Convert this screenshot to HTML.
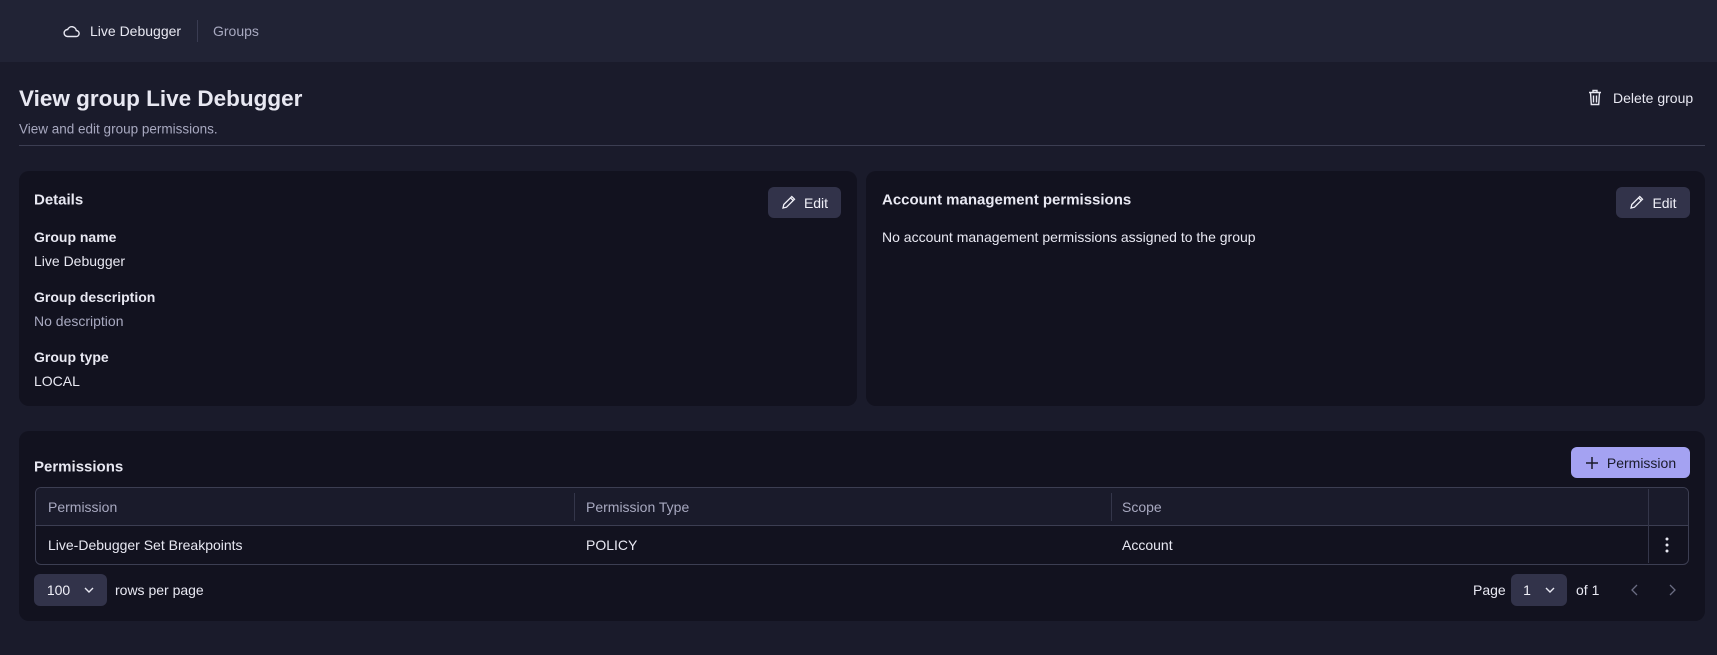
<!DOCTYPE html>
<html><head><meta charset="utf-8"><style>
*{box-sizing:border-box;margin:0;padding:0}
body{width:1717px;height:655px;overflow:hidden;background:#1a1b2b;font-family:"Liberation Sans",sans-serif;color:#e8e8f2;font-size:14px;position:relative}
.abs{position:absolute;white-space:nowrap}
.hdr{position:absolute;left:0;top:0;width:1717px;height:62px;background:#212335}
.card{position:absolute;background:#12121f;border-radius:10px}
.btn{position:absolute;background:#32334a;border-radius:6px;display:flex;align-items:center;justify-content:center;gap:8px;font-size:14px;color:#f0f0f8}
.lbl{font-weight:bold;font-size:14px}
.muted{color:#a8a9c0}
.vc{transform:translateY(-50%)}
</style></head><body>
<div class="hdr"></div>
<svg class="abs" style="left:63px;top:24px" width="17" height="14" viewBox="0 0 17 14"><path d="M4.5 12.5h8.5a3 3 0 0 0 .3-6 4.5 4.5 0 0 0-8.6-1A3.3 3.3 0 0 0 4.5 12.5z" fill="none" stroke="#e8e8f2" stroke-width="1.4"/></svg>
<div class="abs vc" style="left:90px;top:31px">Live Debugger</div>
<div class="abs" style="left:197px;top:20px;width:1px;height:22px;background:#3a3c52"></div>
<div class="abs vc muted" style="left:213px;top:31px">Groups</div>

<div class="abs vc" style="left:19px;top:99px;font-size:22.5px;font-weight:bold">View group Live Debugger</div>
<div class="abs vc muted" style="left:19px;top:129px;font-size:13.5px">View and edit group permissions.</div>
<div class="abs" style="left:19px;top:145px;width:1686px;height:1px;background:#3c3e52"></div>
<svg class="abs" style="left:1588px;top:89px" width="14" height="17" viewBox="0 0 14 17"><path d="M1 3.5h12M5 3.5V1.5h4v2M2.5 3.5l.8 12h7.4l.8-12M5.5 6.5v7M8.5 6.5v7" fill="none" stroke="#e8e8f2" stroke-width="1.4"/></svg>
<div class="abs vc" style="left:1613px;top:98px">Delete group</div>

<div class="card" style="left:19px;top:171px;width:838px;height:235px"></div>
<div class="card" style="left:866px;top:171px;width:839px;height:235px"></div>
<div class="abs vc lbl" style="left:34px;top:200px;font-size:15px">Details</div>
<div class="btn" style="left:768px;top:187px;width:73px;height:31px"><svg width="15" height="15" viewBox="0 0 15 15"><path d="M2 13l.8-3.5 8-8 2.7 2.7-8 8zM9.5 2.8l2.7 2.7" fill="none" stroke="#f0f0f8" stroke-width="1.3"/></svg>Edit</div>
<div class="abs vc lbl" style="left:34px;top:237px">Group name</div>
<div class="abs vc" style="left:34px;top:261px">Live Debugger</div>
<div class="abs vc lbl" style="left:34px;top:297px">Group description</div>
<div class="abs vc muted" style="left:34px;top:321px">No description</div>
<div class="abs vc lbl" style="left:34px;top:357px">Group type</div>
<div class="abs vc" style="left:34px;top:381px">LOCAL</div>

<div class="abs vc lbl" style="left:882px;top:200px;font-size:15px">Account management permissions</div>
<div class="btn" style="left:1616px;top:187px;width:74px;height:31px"><svg width="15" height="15" viewBox="0 0 15 15"><path d="M2 13l.8-3.5 8-8 2.7 2.7-8 8zM9.5 2.8l2.7 2.7" fill="none" stroke="#f0f0f8" stroke-width="1.3"/></svg>Edit</div>
<div class="abs vc" style="left:882px;top:237px">No account management permissions assigned to the group</div>

<div class="card" style="left:19px;top:431px;width:1686px;height:190px"></div>
<div class="abs vc lbl" style="left:34px;top:467px;font-size:15px">Permissions</div>
<div class="btn" style="left:1571px;top:447px;width:119px;height:31px;background:#a4a2f2;color:#1a1b2b"><svg width="14" height="14" viewBox="0 0 14 14"><path d="M7 1v12M1 7h12" stroke="#1a1b2b" stroke-width="1.5"/></svg>Permission</div>
<div class="abs" style="left:35px;top:487px;width:1654px;height:78px;border:1.5px solid #3c3e52;border-radius:6px;overflow:hidden">
 <div style="position:absolute;left:0;top:0;width:100%;height:38px;background:#1a1b2b;border-bottom:1.5px solid #3c3e52"></div>
</div>
<div class="abs" style="left:574px;top:493px;width:1px;height:28px;background:#34364a"></div>
<div class="abs" style="left:1111px;top:493px;width:1px;height:28px;background:#34364a"></div>
<div class="abs" style="left:1648px;top:489px;width:1px;height:74px;background:#34364a"></div>
<div class="abs vc muted" style="left:48px;top:507px">Permission</div>
<div class="abs vc muted" style="left:586px;top:507px">Permission Type</div>
<div class="abs vc muted" style="left:1122px;top:507px">Scope</div>
<div class="abs vc" style="left:48px;top:545px">Live-Debugger Set Breakpoints</div>
<div class="abs vc" style="left:586px;top:545px">POLICY</div>
<div class="abs vc" style="left:1122px;top:545px">Account</div>
<svg class="abs" style="left:1665px;top:537px" width="4" height="16"><circle cx="2" cy="2" r="1.5" fill="#e8e8f2"/><circle cx="2" cy="8" r="1.5" fill="#e8e8f2"/><circle cx="2" cy="14" r="1.5" fill="#e8e8f2"/></svg>

<div class="btn" style="left:34px;top:574px;width:73px;height:32px;gap:14px">100<svg width="10" height="6" viewBox="0 0 10 6"><path d="M1 1l4 4 4-4" fill="none" stroke="#e8e8f2" stroke-width="1.4"/></svg></div>
<div class="abs vc" style="left:115px;top:590px">rows per page</div>
<div class="abs vc" style="left:1473px;top:590px">Page</div>
<div class="btn" style="left:1511px;top:574px;width:56px;height:32px;gap:14px">1<svg width="10" height="6" viewBox="0 0 10 6"><path d="M1 1l4 4 4-4" fill="none" stroke="#e8e8f2" stroke-width="1.4"/></svg></div>
<div class="abs vc" style="left:1576px;top:590px">of 1</div>
<svg class="abs" style="left:1631px;top:584px" width="7" height="12"><path d="M6 1L1 6l5 5" fill="none" stroke="#6a6c82" stroke-width="1.3"/></svg>
<svg class="abs" style="left:1669px;top:584px" width="7" height="12"><path d="M1 1l5 5-5 5" fill="none" stroke="#6a6c82" stroke-width="1.3"/></svg>
</body></html>
